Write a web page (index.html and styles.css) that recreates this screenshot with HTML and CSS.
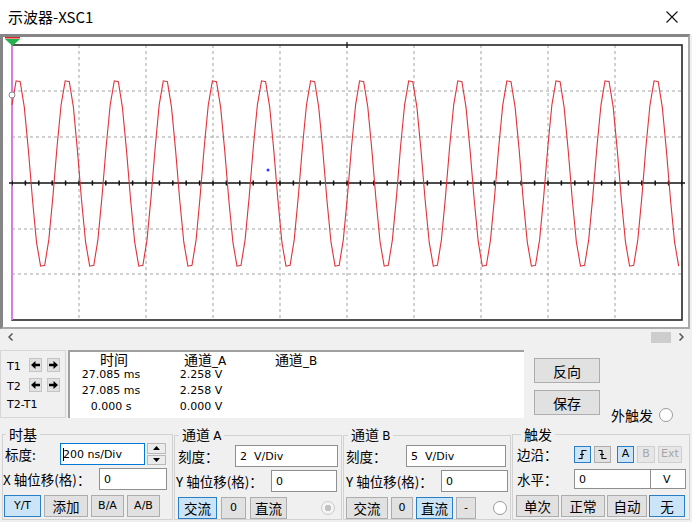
FILE: index.html
```html
<!DOCTYPE html>
<html lang="zh-CN">
<head>
    <meta charset="UTF-8">
    <title>示波器-XSC1</title>
    <link rel="stylesheet" href="styles.css">
</head>
<body>
    <div class="titlebar">
        <span class="title">示波器-XSC1</span>
        <svg class="close" width="12" height="12" viewBox="0 0 12 12"><path d="M0.5 0.5L11.5 11.5M11.5 0.5L0.5 11.5" stroke="#111" stroke-width="1.1"/></svg>
    </div>

    <div class="scope">
        <svg class="screen" width="684" height="290" viewBox="3 37 684 290">
            <path d="M79 45V320M146 45V320M213 45V320M280 45V320M347 45V320M414 45V320M481 45V320M548 45V320M615 45V320" stroke="#a3a3a3" stroke-width="1" stroke-dasharray="3 3"/>
            <path d="M12 91H682M12 137H682M12 229H682M12 274H682" stroke="#a3a3a3" stroke-width="1" stroke-dasharray="3 3"/>
            <rect x="12" y="45" width="670" height="275" fill="none" stroke="#262626" stroke-width="1.6"/>
            <line x1="12" y1="45" x2="12" y2="320" stroke="#d47ee0" stroke-width="2"/>
            <line x1="9" y1="183" x2="685" y2="183" stroke="#111" stroke-width="1.3"/>
            <line x1="12" y1="183" x2="682" y2="183" stroke="#111" stroke-width="5" stroke-dasharray="1.5 11.9" stroke-dashoffset="0.75"/>
            <line x1="347" y1="42" x2="347" y2="48" stroke="#111" stroke-width="1.2"/>
            <polyline id="trace" fill="none" stroke="#e4313a" stroke-width="1.1" points=""/>
            <path d="M5 37.5H20" stroke="#e02020" stroke-width="2"/>
            <path d="M5 39L20 39L12.5 46Z" fill="#22b14c"/>
            <circle cx="12" cy="95" r="3" fill="#fff" stroke="#8a8a8a" stroke-width="1"/>
            <circle cx="268" cy="170" r="1.5" fill="#3a3aff"/>
        </svg>
    </div>

    <div class="hscroll">
        <svg width="5" height="8" viewBox="0 0 5 8"><path d="M4.5 0.5L1 4L4.5 7.5" fill="none" stroke="#555" stroke-width="1.5"/></svg>
        <span class="thumb"></span>
        <svg class="next" width="5" height="8" viewBox="0 0 5 8"><path d="M0.5 0.5L4 4L0.5 7.5" fill="none" stroke="#555" stroke-width="1.5"/></svg>
    </div>

    <div class="panel-top">
        <div class="cursors">
            <div class="cur-row">
                <span class="cur-lbl">T1</span>
                <span class="arrow-btn"><svg width="9" height="8" viewBox="0 0 9 8"><path d="M0 4L4.5 0V2.8H9V5.2H4.5V8Z"/></svg></span>
                <span class="arrow-btn"><svg width="9" height="8" viewBox="0 0 9 8"><path d="M9 4L4.5 0V2.8H0V5.2H4.5V8Z"/></svg></span>
            </div>
            <div class="cur-row">
                <span class="cur-lbl">T2</span>
                <span class="arrow-btn"><svg width="9" height="8" viewBox="0 0 9 8"><path d="M0 4L4.5 0V2.8H9V5.2H4.5V8Z"/></svg></span>
                <span class="arrow-btn"><svg width="9" height="8" viewBox="0 0 9 8"><path d="M9 4L4.5 0V2.8H0V5.2H4.5V8Z"/></svg></span>
            </div>
            <div class="cur-diff">T2-T1</div>
        </div>
        <div class="readout">
            <div class="head head-t">时间</div>
            <div class="head head-a">通道<span class="latin">_A</span></div>
            <div class="head">通道<span class="latin">_B</span></div>
            <div class="val">27.085 ms</div>
            <div class="val">2.258 V</div>
            <div class="val"></div>
            <div class="val">27.085 ms</div>
            <div class="val">2.258 V</div>
            <div class="val"></div>
            <div class="val">0.000 s</div>
            <div class="val">0.000 V</div>
            <div class="val"></div>
        </div>
        <div class="actions">
            <button class="btn big">反向</button>
            <button class="btn big">保存</button>
        </div>
        <div class="ext">
            <span>外触发</span>
            <span class="radio"></span>
        </div>
    </div>

    <div class="groups">
        <fieldset class="group g-time">
            <legend>时基</legend>
            <div class="row">
                <span class="lbl lbl-scale">标度:</span>
                <div class="field focus w-85"><span class="caret"></span>200 ns/Div</div>
                <div class="spin">
                    <span><svg width="7" height="4" viewBox="0 0 7 4"><path d="M0 4L3.5 0L7 4Z"/></svg></span>
                    <span><svg width="7" height="4" viewBox="0 0 7 4"><path d="M0 0L7 0L3.5 4Z"/></svg></span>
                </div>
            </div>
            <div class="row r2">
                <span class="lbl lbl-xoff">X 轴位移(格)：</span>
                <div class="field w-68">0</div>
            </div>
            <div class="row r3 btns-time">
                <button class="btn on latin">Y/T</button>
                <button class="btn">添加</button>
                <button class="btn latin">B/A</button>
                <button class="btn latin">A/B</button>
            </div>
        </fieldset>

        <fieldset class="group g-a">
            <legend>通道 <span class="latin">A</span></legend>
            <div class="row">
                <span class="lbl lbl-scale-a">刻度：</span>
                <div class="field w-103">2&nbsp; V/Div</div>
            </div>
            <div class="row r2">
                <span class="lbl lbl-yoff">Y 轴位移(格)：</span>
                <div class="field w-66">0</div>
            </div>
            <div class="row r3 btns-a">
                <button class="btn on">交流</button>
                <button class="btn latin">0</button>
                <button class="btn">直流</button>
                <span class="radio dim"></span>
            </div>
        </fieldset>

        <fieldset class="group g-b">
            <legend>通道 <span class="latin">B</span></legend>
            <div class="row">
                <span class="lbl lbl-scale-b">刻度：</span>
                <div class="field w-100">5&nbsp; V/Div</div>
            </div>
            <div class="row r2">
                <span class="lbl lbl-yoff-b">Y 轴位移(格)：</span>
                <div class="field w-67">0</div>
            </div>
            <div class="row r3 btns-b">
                <button class="btn">交流</button>
                <button class="btn latin">0</button>
                <button class="btn on">直流</button>
                <button class="btn latin">-</button>
                <span class="radio"></span>
            </div>
        </fieldset>

        <fieldset class="group g-trig">
            <legend>触发</legend>
            <div class="row">
                <span class="lbl lbl-trig">边沿：</span>
                <div class="edges">
                    <button class="btn on"><svg width="11" height="11" viewBox="0 0 11 11"><path d="M1.5 9.5H5V1.5H9.5M3 5.5H7" fill="none" stroke="#000" stroke-width="1.1"/></svg></button>
                    <button class="btn"><svg width="11" height="11" viewBox="0 0 11 11"><path d="M1.5 1.5H5V9.5H9.5M3 5.5H7" fill="none" stroke="#000" stroke-width="1.1"/></svg></button>
                    <button class="btn on latin src">A</button>
                    <button class="btn off latin">B</button>
                    <button class="btn off latin">Ext</button>
                </div>
            </div>
            <div class="row r2">
                <span class="lbl lbl-trig">水平：</span>
                <div class="field short w-77">0</div>
                <div class="field short unit">V</div>
            </div>
            <div class="row r3 btns-trig">
                <button class="btn">单次</button>
                <button class="btn">正常</button>
                <button class="btn">自动</button>
                <button class="btn on">无</button>
            </div>
        </fieldset>
    </div>

<script>
    // channel A trace: ~13.7 periods across the screen
    const trace = document.getElementById("trace"),
    period = 49.08,
    pts = [];
    for (let x = 12; x <= 682; x += period / 12) {
        const y = 173.5 - 95.5 * Math.cos(2 * Math.PI * (x - 18) / period);
        pts.push(x.toFixed(1) + "," + y.toFixed(1));
    }
    trace.setAttribute("points", pts.join(" "));
</script>
</body>
</html>
```

FILE: styles.css
```css
html{
    font-family: "Noto Sans CJK SC", sans-serif;
}
body{
    margin: 0;
    width: 692px;
    height: 522px;
    overflow: hidden;
    background: #f0f0f0;
    font-size: 13px;
    color: #000;
}
.latin{
    font-family: "DejaVu Sans", sans-serif;
    font-size: 11px;
}

/* title */
.titlebar{
    height: 34px;
    background: #fff;
    display: flex;
    align-items: center;
    justify-content: space-between;
    padding: 0 14px 0 8px;
    box-sizing: border-box;
}
.title{
    font-size: 15px;
    line-height: 20px;
}
.close{
    display: block;
}

/* scope screen */
.scope{
    height: 290px;
    margin-right: 2px;
    border-style: solid;
    border-width: 3px 2px 2px 3px;
    border-color: #858585 #a9a9a9 #a9a9a9 #858585;
    background: #fff;
}
.screen{
    display: block;
}
.hscroll{
    height: 16px;
    display: flex;
    align-items: center;
    padding: 0 8px;
}
.thumb{
    margin-left: auto;
    width: 20px;
    height: 11px;
    background: #cdcdcd;
}
.next{
    margin-left: 8px;
}

/* cursors + readout */
.panel-top{
    display: flex;
    height: 68px;
    margin-top: 5px;
}
.cursors{
    width: 66px;
    box-sizing: border-box;
    border: 1px solid #d6d6d6;
    padding: 7px 0 0 6px;
    font-family: "DejaVu Sans", sans-serif;
    font-size: 11px;
}
.cur-row{
    display: flex;
    align-items: center;
    height: 14px;
    margin-bottom: 6px;
}
.cur-lbl{
    width: 23px;
    padding-top: 3px;
}
.arrow-btn{
    width: 13px;
    height: 14px;
    box-sizing: border-box;
    border: 1px solid #c4c4c4;
    background: #e1e1e1;
    margin-right: 5px;
    display: flex;
    align-items: center;
    justify-content: center;
}
.arrow-btn svg{
    display: block;
}
.cur-diff{
    margin-top: 5px;
    line-height: 14px;
}
.readout{
    width: 456px;
    margin-left: 2px;
    box-sizing: border-box;
    background: #fff;
    border-top: 2px solid #a0a0a0;
    border-left: 2px solid #a0a0a0;
    display: grid;
    grid-template-columns: 82px 98px 92px;
    grid-template-rows: 14px 16px 16px 16px;
    align-content: start;
}
.head{
    text-align: center;
    font-size: 14px;
    line-height: 14px;
}
.head .latin{
    font-size: 12px;
}
.head-t{
    padding-left: 6px;
}
.head-a{
    padding-left: 8px;
}
.val{
    text-align: center;
    font-family: "DejaVu Sans", sans-serif;
    font-size: 11px;
    line-height: 14px;
    padding-top: 2px;
}
.actions{
    margin-left: 10px;
    padding-top: 8px;
    display: flex;
    flex-direction: column;
    gap: 7px;
}
.ext{
    align-self: flex-end;
    display: flex;
    align-items: center;
    margin: 0 0 -6px 11px;
    font-size: 14px;
    line-height: 18px;
}
.ext .radio{
    margin-left: 6px;
}

/* buttons + fields */
.btn{
    height: 22px;
    box-sizing: border-box;
    border: 1px solid #adadad;
    background: #e1e1e1;
    padding: 0;
    font-family: "Noto Sans CJK SC", sans-serif;
    font-size: 13.5px;
    line-height: 18px;
    color: #000;
    display: flex;
    align-items: center;
    justify-content: center;
}
.btn.latin{
    font-family: "DejaVu Sans", sans-serif;
    font-size: 11px;
}
.btn.big{
    width: 66px;
    height: 25px;
    font-size: 14px;
}
.btn.on{
    background: #cce4f7;
    border-color: #2a7fc4;
}
.btn.off{
    color: #a6a6a6;
    background: #e6e6e6;
    border-color: #cfcfcf;
}
.radio{
    width: 14px;
    height: 14px;
    box-sizing: border-box;
    border: 1px solid #9a9a9a;
    border-radius: 50%;
    background: #fff;
}
.radio.dim{
    border-color: #cacaca;
    background: radial-gradient(circle, #c2c2c2 0 3px, #f4f4f4 3.5px);
}
.field{
    height: 22px;
    box-sizing: border-box;
    border: 1px solid #8f8f8f;
    background: #fff;
    padding-left: 4px;
    display: flex;
    align-items: center;
    font-family: "DejaVu Sans", sans-serif;
    font-size: 11px;
}
.field.focus{
    border-color: #0078d7;
    padding-left: 2px;
}
.caret{
    width: 1px;
    height: 13px;
    background: #000;
    margin-right: -1px;
}
.field.short{
    height: 20px;
}
.field.unit{
    width: 35px;
    padding-left: 12px;
    border-left: 0;
}
.w-85{ width: 85px; }
.w-68{ width: 68px; }
.w-103{ width: 103px; }
.w-66{ width: 66px; }
.w-100{ width: 100px; }
.w-67{ width: 67px; }
.w-77{ width: 77px; }
.spin{
    margin-left: 2px;
    width: 19px;
    height: 22px;
    display: flex;
    flex-direction: column;
    gap: 1px;
}
.spin span{
    flex: 1;
    box-sizing: border-box;
    border: 1px solid #b9b9b9;
    background: #ececec;
    display: flex;
    align-items: center;
    justify-content: center;
}
.spin svg{
    display: block;
}

/* control groups */
.groups{
    display: flex;
    margin-top: 8px;
    padding-left: 2px;
    gap: 1px;
}
.group{
    margin: 0;
    padding: 0 2px 1px;
    height: 94px;
    box-sizing: border-box;
    border: 1px solid #d2d2d2;
    min-width: 0;
}
.group legend{
    padding: 0 3px;
    margin-left: 2px;
    font-size: 14px;
    line-height: 17px;
}
.group legend .latin{
    font-size: 12px;
}
.g-time{ width: 171px; padding-left: 1px; }
.g-a{ width: 168px; }
.g-b{ width: 168px; }
.g-trig{ width: 178px; }
.g-trig legend{
    margin-left: 6px;
}
.row{
    display: flex;
    align-items: center;
    height: 22px;
}
.row.r2{
    margin-top: 3px;
}
.row.r3{
    margin-top: 5px;
}
.lbl{
    font-size: 13.5px;
    line-height: 22px;
    white-space: nowrap;
}
.lbl-scale{ width: 55px; padding-left: 1px; }
.lbl-xoff{ width: 96px; margin-left: -1px; }
.lbl-scale-a{ width: 57px; padding-left: 1px; }
.lbl-yoff{ width: 95px; margin-left: -1px; }
.lbl-scale-b{ width: 60px; }
.lbl-yoff-b{ width: 95px; }
.lbl-trig{ width: 57px; padding-left: 2px; }
.btns-time{
    display: grid;
    grid-template-columns: 37px 44px 33px 33px;
    column-gap: 3px;
}
.btns-a{
    display: grid;
    grid-template-columns: 39px 25px 37px 1fr;
    column-gap: 4px;
    padding-left: 1px;
}
.btns-a .radio{
    justify-self: end;
    margin-right: 4px;
}
.btns-b{
    display: grid;
    grid-template-columns: 42px 22px 37px 20px 1fr;
    column-gap: 3px;
}
.btns-b .radio{
    justify-self: end;
    margin-right: 1px;
}
.btns-trig{
    display: grid;
    grid-template-columns: 43px 44px 40px 36px;
    column-gap: 2px;
    padding-left: 1px;
}
.edges{
    display: grid;
    grid-template-columns: 17px 17px 20px 18px 24px;
    column-gap: 3px;
}
.edges .btn{
    height: 17px;
}
.edges .src{
    margin-left: 3px;
}
```
